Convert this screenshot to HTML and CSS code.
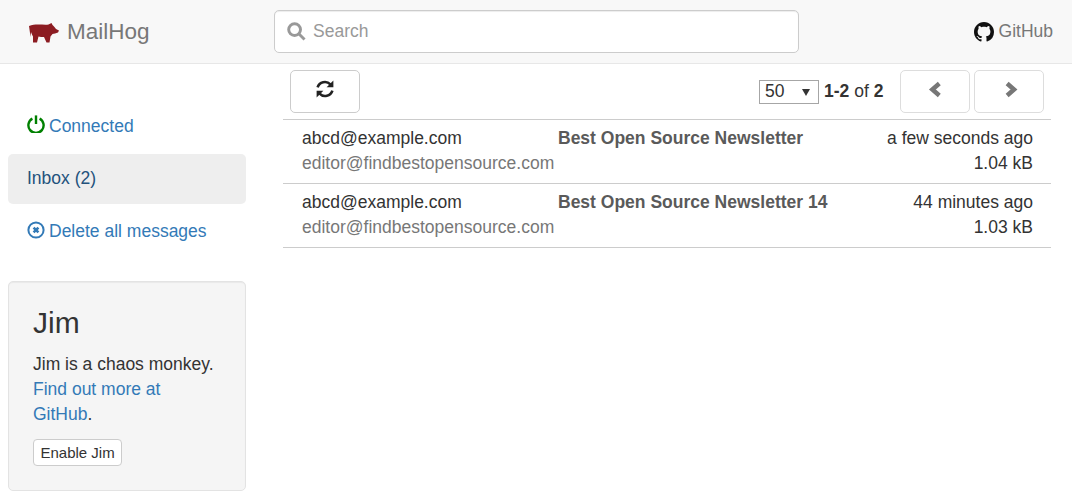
FILE: index.html
```html
<!DOCTYPE html>
<html lang="en">
<head>
    <meta charset="UTF-8">
    <meta name="viewport" content="width=device-width, initial-scale=1.0">
    <title>MailHog</title>
    <link rel="stylesheet" href="styles.css">
</head>
<body>
    <nav class="navbar">
        <a class="brand" href="#">
            <svg class="pig" viewBox="0 0 30 20" aria-hidden="true">
                <path d="M0 3C3 1.5 6 1.5 9 1.5C13 1.5 17 2 19.5 1.5L22.5 0 23.5 2C25 3 26 5 27 6L30 7.5 29 9.5C27 10.5 25 10.5 23.5 11L21.5 13.5 20.5 19.5 17.5 19.5 15 14C13 14 11 14 9.5 13.5L8 19.5 4 19.5 4 13.5C3 12 2.5 10 2 9L1.5 14C1 10 .5 6 0 3Z"/>
            </svg>
            <span>MailHog</span>
        </a>
        <div class="search-box">
            <svg class="search-icon" viewBox="0 0 18 18" aria-hidden="true">
                <circle cx="7.2" cy="7.2" r="5.6"/>
                <path d="M11.4 11.4 16.6 16.6"/>
            </svg>
            <input type="text" placeholder="Search">
        </div>
        <a class="github-link" href="#">
            <svg class="github-icon" viewBox="0 0 16 16" aria-hidden="true">
                <path d="M8 0C3.58 0 0 3.58 0 8c0 3.54 2.29 6.53 5.47 7.59.4.07.55-.17.55-.38 0-.19-.01-.82-.01-1.49-2.01.37-2.53-.49-2.69-.94-.09-.23-.48-.94-.82-1.13-.28-.15-.68-.52-.01-.53.63-.01 1.08.58 1.23.82.72 1.21 1.87.87 2.33.66.07-.52.28-.87.51-1.07-1.78-.2-3.64-.89-3.64-3.95 0-.87.31-1.59.82-2.15-.08-.2-.36-1.02.08-2.12 0 0 .67-.21 2.2.82.64-.18 1.32-.27 2-.27.68 0 1.36.09 2 .27 1.53-1.04 2.2-.82 2.2-.82.44 1.1.16 1.92.08 2.12.51.56.82 1.27.82 2.15 0 3.07-1.87 3.75-3.65 3.95.29.25.54.73.54 1.48 0 1.07-.01 1.93-.01 2.2 0 .21.15.46.55.38A8.013 8.013 0 0016 8c0-4.42-3.58-8-8-8z"/>
            </svg>
            <span>GitHub</span>
        </a>
    </nav>

    <div class="page">
        <aside class="sidebar">
            <ul class="side-nav">
                <li class="status">
                    <a href="#">
                        <svg class="side-icon power" viewBox="0 0 18 18" aria-hidden="true">
                            <path d="M5.4 3.6A7.6 7.6 0 1 0 12.6 3.6"/>
                            <path d="M9 .4V9"/>
                        </svg>
                        Connected
                    </a>
                </li>
                <li class="active"><a href="#">Inbox (2)</a></li>
                <li>
                    <a href="#">
                        <svg class="side-icon remove" viewBox="0 0 18 18" aria-hidden="true">
                            <circle cx="9" cy="9" r="7.6"/>
                            <path class="cross" d="M6.6 6.6 11.4 11.4M11.4 6.6 6.6 11.4"/>
                        </svg>
                        Delete all messages
                    </a>
                </li>
            </ul>
            <div class="well">
                <h3>Jim</h3>
                <p>Jim is a chaos monkey. <a href="#">Find out more at GitHub</a>.</p>
                <button class="btn-small">Enable Jim</button>
            </div>
        </aside>

        <main class="content">
            <div class="toolbar">
                <button class="btn">
                    <svg class="refresh-icon" viewBox="0 0 18 18" aria-hidden="true">
                        <path class="arc" d="M1.6 7.4A7.6 7.6 0 0 1 14.4 4.4"/>
                        <path class="arc" d="M16.4 10.6A7.6 7.6 0 0 1 3.6 13.6"/>
                        <path class="head" d="M17.4 .4V7.2H10.6Z"/>
                        <path class="head" d="M.6 17.6V10.8H7.4Z"/>
                    </svg>
                </button>
                <div class="pager">
                    <div class="per-page-wrap">
                        <select class="per-page">
                            <option>50</option>
                        </select>
                    </div>
                    <span class="count"><b>1-2</b> of <b>2</b></span>
                    <div class="pager-buttons">
                        <button class="btn">
                            <svg class="chevron" viewBox="0 0 14 16" aria-hidden="true"><path d="M10.2 3 4.4 8 10.2 13"/></svg>
                        </button>
                        <button class="btn">
                            <svg class="chevron" viewBox="0 0 14 16" aria-hidden="true"><path d="M5 3 10.8 8 5 13"/></svg>
                        </button>
                    </div>
                </div>
            </div>

            <div class="messages">
                <div class="message">
                    <div class="msg-from">
                        <div>abcd@example.com</div>
                        <div class="muted">editor@findbestopensource.com</div>
                    </div>
                    <div class="msg-subject">Best Open Source Newsletter</div>
                    <div class="msg-meta">
                        <div>a few seconds ago</div>
                        <div>1.04 kB</div>
                    </div>
                </div>
                <div class="message">
                    <div class="msg-from">
                        <div>abcd@example.com</div>
                        <div class="muted">editor@findbestopensource.com</div>
                    </div>
                    <div class="msg-subject">Best Open Source Newsletter 14</div>
                    <div class="msg-meta">
                        <div>44 minutes ago</div>
                        <div>1.03 kB</div>
                    </div>
                </div>
            </div>
        </main>
    </div>
</body>
</html>
```

FILE: styles.css
```css
* {
    box-sizing: border-box;
}
body {
    margin: 0;
    font-family: "Liberation Sans", Arial, sans-serif;
    font-size: 17.5px;
    line-height: 25px;
    color: #333;
    background: #fff;
}
a {
    color: #337ab7;
    text-decoration: none;
}
.navbar {
    display: flex;
    align-items: center;
    height: 64px;
    padding: 0 19px 0 29px;
    background: #f8f8f8;
    border-bottom: 1px solid #e7e7e7;
}
.brand {
    display: flex;
    align-items: center;
    gap: 8px;
    width: 245px;
    font-size: 22.5px;
    color: #777;
}
.pig {
    width: 30px;
    height: 20px;
    margin-top: 2px;
    fill: #8c1c22;
}
.search-box {
    display: flex;
    align-items: center;
    gap: 7px;
    width: 525px;
    height: 43px;
    padding: 0 12px;
    background: #fff;
    border: 1px solid #ccc;
    border-radius: 5px;
    box-shadow: inset 0 1px 1px rgba(0, 0, 0, .075);
}
.search-icon {
    width: 19px;
    height: 19px;
    fill: none;
    stroke: #999;
    stroke-width: 2.8;
}
.search-box input {
    flex: 1;
    border: none;
    outline: none;
    padding: 0;
    font: inherit;
    background: transparent;
}
.search-box input::placeholder {
    color: #999;
}
.github-link {
    display: flex;
    align-items: center;
    gap: 5px;
    margin-left: auto;
    font-size: 17.5px;
    color: #777;
}
.github-icon {
    width: 20px;
    height: 20px;
    fill: #111;
}
.page {
    display: flex;
    align-items: flex-start;
    padding: 0 21px 0 8px;
}
.sidebar {
    width: 238px;
    flex-shrink: 0;
    padding-top: 37px;
}
.side-nav {
    list-style: none;
    margin: 0 0 25px;
    padding: 0;
    display: flex;
    flex-direction: column;
    gap: 2px;
}
.side-nav .status {
    margin-bottom: 1px;
}
.side-nav a {
    display: flex;
    align-items: center;
    gap: 4px;
    height: 50px;
    padding: 0 19px;
    border-radius: 5px;
}
.side-nav .active a {
    padding-bottom: 2px;
    color: #23527c;
    background: #eee;
}
.side-icon {
    width: 18px;
    height: 18px;
    fill: none;
}
.power {
    stroke: #008000;
    stroke-width: 2.4;
    margin-top: -4px;
}
.remove {
    stroke: #337ab7;
    stroke-width: 2;
    margin-top: -2px;
}
.remove .cross {
    stroke-width: 2.6;
}
.well {
    height: 210px;
    padding: 24px;
    background: #f5f5f5;
    border: 1px solid #e3e3e3;
    border-radius: 5px;
    box-shadow: inset 0 1px 1px rgba(0, 0, 0, .05);
}
.well h3 {
    margin: 0 0 13px;
    font-size: 30px;
    font-weight: 500;
    line-height: 33px;
}
.well p {
    margin: 0 0 12px;
}
.btn-small {
    height: 27px;
    padding: 0 6.5px;
    font: inherit;
    font-size: 15px;
    color: #333;
    background: #fff;
    border: 1px solid #ccc;
    border-radius: 4px;
}
.content {
    flex: 1;
    margin-left: 37px;
}
.toolbar {
    display: flex;
    align-items: center;
    justify-content: space-between;
    height: 55px;
    padding: 0 7px;
}
.btn {
    display: flex;
    align-items: center;
    justify-content: center;
    width: 70px;
    height: 43px;
    padding: 0;
    background: #fff;
    border: 1px solid #ccc;
    border-radius: 5px;
}
.refresh-icon {
    width: 18px;
    height: 18px;
    margin-top: -6px;
}
.refresh-icon .arc {
    fill: none;
    stroke: #222;
    stroke-width: 2.6;
}
.refresh-icon .head {
    fill: #222;
}
.pager {
    display: flex;
    align-items: center;
}
.per-page-wrap {
    position: relative;
    display: flex;
}
.per-page-wrap::after {
    content: "";
    position: absolute;
    top: 9px;
    right: 9px;
    border-style: solid;
    border-width: 7px 4px 0;
    border-color: #333 transparent transparent;
    pointer-events: none;
}
.per-page {
    appearance: none;
    width: 60px;
    height: 24px;
    padding: 0 0 3px 5px;
    font: inherit;
    font-size: 17.5px;
    line-height: 20px;
    color: #333;
    background: #fff;
    border: 1px solid #a6a6a6;
    border-radius: 0;
}
.count {
    margin-left: 5px;
    width: 76px;
}
.pager-buttons {
    display: flex;
    gap: 4px;
}
.pager-buttons .btn {
    border-color: #ddd;
}
.chevron {
    width: 17px;
    height: 19px;
    margin-top: -4px;
    fill: none;
    stroke: #777;
    stroke-width: 3.8;
}
.messages {
    border-top: 1px solid #ccc;
}
.message {
    display: flex;
    height: 64px;
    padding: 6px 18px 0 19px;
    border-bottom: 1px solid #ccc;
}
.msg-from {
    width: 256px;
    white-space: nowrap;
}
.muted {
    color: #777;
}
.msg-subject {
    flex: 1;
    font-weight: bold;
    color: #5a5a5a;
}
.msg-meta {
    text-align: right;
}
```
